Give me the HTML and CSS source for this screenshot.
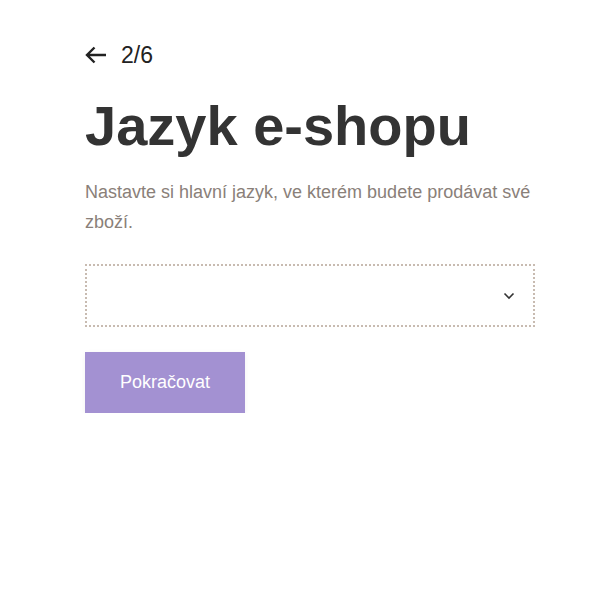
FILE: index.html
```html
<!DOCTYPE html>
<html lang="cs">
<head>
    <meta charset="UTF-8">
    <meta name="viewport" content="width=device-width, initial-scale=1.0">
    <title>Jazyk e-shopu</title>
    <link rel="stylesheet" href="styles.css">
</head>
<body>
    <div class="container">
        <div class="step">
            <a class="back" href="#">
                <svg width="22" height="18" viewBox="0 0 22 18">
                    <path d="M21 9H2M9.5 1.5L2 9l7.5 7.5" fill="none" stroke="#222" stroke-width="2.4"/>
                </svg>
            </a>
            <span>2/6</span>
        </div>
        <h1>Jazyk e-shopu</h1>
        <p class="lead">Nastavte si hlavní jazyk, ve kterém budete prodávat své zboží.</p>
        <div class="select">
            <svg width="12" height="8" viewBox="0 0 12 8">
                <path d="M1.5 1.5L6 6l4.5-4.5" fill="none" stroke="#333" stroke-width="1.6"/>
            </svg>
        </div>
        <button class="btn">Pokračovat</button>
    </div>
</body>
</html>
```

FILE: styles.css
```css
body {
    font-family: "Liberation Sans", Arial, sans-serif;
    margin: 0;
    padding: 0;
    background-color: white;
    color: #333;
}
.container {
    width: 450px;
    padding: 40px 0 0 85px;
}
.step {
    display: flex;
    align-items: center;
    gap: 14px;
    font-size: 23px;
    color: #222;
    height: 30px;
}
.back {
    display: flex;
}
h1 {
    font-size: 56px;
    font-weight: bold;
    margin: 22px 0 0;
    line-height: 1.2;
    color: #333;
}
.lead {
    font-size: 18px;
    line-height: 30px;
    color: #8a8079;
    margin: 18px 0 27px;
}
.select {
    height: 59px;
    border: 2px dotted #c8bbb1;
    display: flex;
    align-items: center;
    justify-content: flex-end;
    padding-right: 18px;
}
.btn {
    margin-top: 25px;
    width: 160px;
    height: 61px;
    border: none;
    background-color: #a391d2;
    color: white;
    font-family: "Liberation Sans", Arial, sans-serif;
    font-size: 18px;
    box-shadow: 0 2px 6px rgba(0, 0, 0, 0.06);
    cursor: pointer;
}
```
